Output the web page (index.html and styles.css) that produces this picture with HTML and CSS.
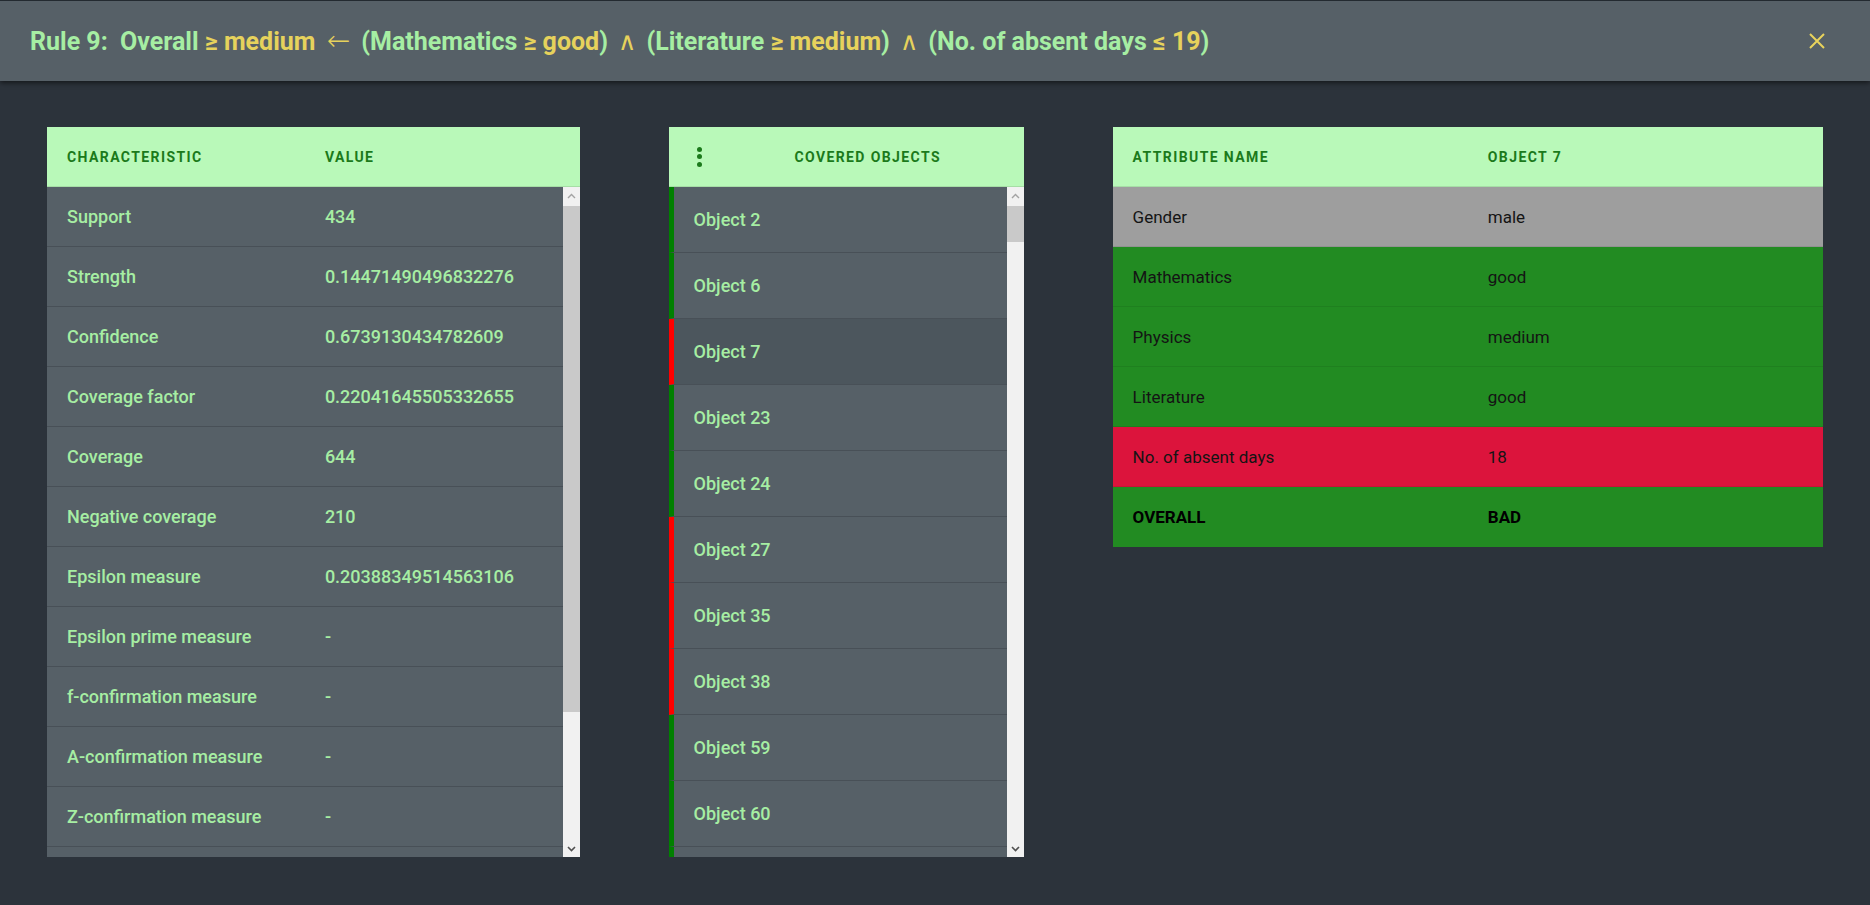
FILE: index.html
```html
<!DOCTYPE html>
<html lang="en">
<head>
<meta charset="utf-8">
<title>Rule 9</title>
<link rel="stylesheet" href="styles.css">
</head>
<body>
<header class="topbar">
  <h1 class="rule-title">
    <span class="g rule-no">Rule 9:</span>
    <span class="g">Overall</span>
    <span class="y">≥ medium</span>
    <span class="y arrow">←</span>
    <span class="g">(Mathematics</span> <span class="y">≥ good</span><span class="g">)</span>
    <span class="y wedge">∧</span>
    <span class="g">(Literature</span> <span class="y">≥ medium</span><span class="g">)</span>
    <span class="y wedge">∧</span>
    <span class="g">(No. of absent days</span> <span class="y">≤ 19</span><span class="g">)</span>
  </h1>
  <button class="close" aria-label="Close">
    <svg width="18" height="18" viewBox="0 0 18 18"><path d="M2 2 L16 16 M16 2 L2 16" stroke="#e8d35c" stroke-width="2" fill="none"/></svg>
  </button>
</header>

<main class="content">
  <section class="panel">
    <div class="thead two-col scroll-pad">
      <div class="th">Characteristic</div>
      <div class="th">Value</div>
    </div>
    <div class="tbody">
      <div class="rows">
        <div class="row two-col"><div>Support</div><div>434</div></div>
        <div class="row two-col"><div>Strength</div><div>0.14471490496832276</div></div>
        <div class="row two-col"><div>Confidence</div><div>0.6739130434782609</div></div>
        <div class="row two-col"><div>Coverage factor</div><div>0.22041645505332655</div></div>
        <div class="row two-col"><div>Coverage</div><div>644</div></div>
        <div class="row two-col"><div>Negative coverage</div><div>210</div></div>
        <div class="row two-col"><div>Epsilon measure</div><div>0.20388349514563106</div></div>
        <div class="row two-col"><div>Epsilon prime measure</div><div>-</div></div>
        <div class="row two-col"><div>f-confirmation measure</div><div>-</div></div>
        <div class="row two-col"><div>A-confirmation measure</div><div>-</div></div>
        <div class="row two-col"><div>Z-confirmation measure</div><div>-</div></div>
      </div>
      <div class="vscroll">
        <div class="sb-btn">
          <svg width="9" height="6" viewBox="0 0 9 6"><path d="M1 5 L4.5 1.5 L8 5" fill="none" stroke="#a3a3a3" stroke-width="1.4"/></svg>
        </div>
        <div class="sb-track"><div class="sb-thumb" style="height:506px"></div></div>
        <div class="sb-btn">
          <svg width="9" height="6" viewBox="0 0 9 6"><path d="M1 1 L4.5 4.5 L8 1" fill="none" stroke="#505050" stroke-width="1.6"/></svg>
        </div>
      </div>
    </div>
  </section>

  <section class="panel">
    <div class="thead objects-head scroll-pad">
      <div class="kebab"><i></i><i></i><i></i></div>
      <div class="th center">Covered objects</div>
    </div>
    <div class="tbody">
      <div class="rows">
        <div class="obj pos">Object 2</div>
        <div class="obj pos">Object 6</div>
        <div class="obj neg selected">Object 7</div>
        <div class="obj pos">Object 23</div>
        <div class="obj pos">Object 24</div>
        <div class="obj neg">Object 27</div>
        <div class="obj neg">Object 35</div>
        <div class="obj neg">Object 38</div>
        <div class="obj pos">Object 59</div>
        <div class="obj pos">Object 60</div>
        <div class="obj pos"></div>
      </div>
      <div class="vscroll">
        <div class="sb-btn">
          <svg width="9" height="6" viewBox="0 0 9 6"><path d="M1 5 L4.5 1.5 L8 5" fill="none" stroke="#a3a3a3" stroke-width="1.4"/></svg>
        </div>
        <div class="sb-track"><div class="sb-thumb" style="height:36px"></div></div>
        <div class="sb-btn">
          <svg width="9" height="6" viewBox="0 0 9 6"><path d="M1 1 L4.5 4.5 L8 1" fill="none" stroke="#505050" stroke-width="1.6"/></svg>
        </div>
      </div>
    </div>
  </section>

  <section class="panel attrs">
    <div class="thead two-col">
      <div class="th">Attribute name</div>
      <div class="th">Object 7</div>
    </div>
    <div class="arow two-col neutral"><div>Gender</div><div>male</div></div>
    <div class="arow two-col ok"><div>Mathematics</div><div>good</div></div>
    <div class="arow two-col ok"><div>Physics</div><div>medium</div></div>
    <div class="arow two-col ok"><div>Literature</div><div>good</div></div>
    <div class="arow two-col bad"><div>No. of absent days</div><div>18</div></div>
    <div class="arow two-col ok strong"><div>OVERALL</div><div>BAD</div></div>
  </section>
</main>
</body>
</html>
```

FILE: styles.css
```css
html, body {
  margin: 0;
  padding: 0;
}
body {
  background: #2c333b;
  font-family: Roboto, "Liberation Sans", sans-serif;
  min-height: 905px;
  overflow: hidden;
}

.topbar {
  height: 80px;
  border-top: 1px solid #232a30;
  background: #566067;
  box-shadow: 0 2px 5px rgba(0, 0, 0, 0.55);
  display: flex;
  align-items: center;
  justify-content: space-between;
  padding: 0 44px 0 30px;
  position: relative;
  z-index: 2;
}
.rule-title {
  margin: 0;
  font-size: 25px;
  font-weight: 700;
  white-space: nowrap;
  line-height: 1;
}
.g { color: #a6eea3; }
.y { color: #e6d25c; }
.rule-no { margin-right: 6px; }
.arrow {
  font-family: "DejaVu Sans ExtraLight", "DejaVu Sans", sans-serif;
  font-size: 28px;
  font-weight: 200;
  line-height: 1;
  margin: 0 5px;
}
.wedge { font-weight: 400; margin: 0 4px; }
.close {
  background: none;
  border: 0;
  padding: 0;
  width: 18px;
  height: 18px;
  display: flex;
  cursor: pointer;
}

.content {
  display: grid;
  grid-template-columns: 3fr 2fr 4fr;
  column-gap: 5%;
  padding: 46px 47px 0;
  align-items: start;
}

.panel {
  background: #566067;
}

.two-col {
  display: grid;
  grid-template-columns: 1fr 1fr;
}
.scroll-pad { padding-right: 17px; }

.thead {
  height: 60px;
  background: #b9f9b9;
  align-items: center;
  border-bottom: 1px solid #a6dea6;
  box-sizing: border-box;
}
.th {
  padding-left: 20px;
  font-size: 14px;
  font-weight: 700;
  letter-spacing: 1.4px;
  text-transform: uppercase;
  color: #1b7a1b;
}
.th.center { padding-left: 0; text-align: center; }

.objects-head {
  display: grid;
  grid-template-columns: 60px 1fr;
}
.kebab {
  display: flex;
  flex-direction: column;
  align-items: center;
  gap: 2.5px;
  padding-left: 2px;
}
.kebab i {
  width: 5px;
  height: 5px;
  border-radius: 50%;
  background: #1b7a1b;
}

.tbody {
  height: 670px;
  display: flex;
}
.rows {
  flex: 1;
  min-width: 0;
  overflow: hidden;
}
.vscroll {
  width: 17px;
  flex: none;
  background: #f1f1f1;
  display: flex;
  flex-direction: column;
}
.sb-btn {
  height: 17px;
  flex: none;
  display: flex;
  align-items: center;
  justify-content: center;
}
.sb-track {
  flex: 1;
  padding-top: 2px;
}
.sb-thumb {
  background: #c9c9c9;
}

.row {
  height: 60px;
  align-items: center;
  border-bottom: 1px solid #485057;
  box-sizing: border-box;
  color: #a6eea3;
  font-size: 18px;
  font-weight: 500;
}
.row > div { padding-left: 20px; white-space: nowrap; }

.obj {
  height: 66px;
  display: flex;
  align-items: center;
  box-sizing: border-box;
  padding-left: 20px;
  border-left: 5px solid #008000;
  border-bottom: 1px solid #485057;
  color: #a6eea3;
  font-size: 18px;
  font-weight: 500;
}
.obj.neg { border-left-color: #ff0000; }
.obj.selected { background: #4c565d; }

.attrs .arow {
  height: 60px;
  align-items: center;
  box-sizing: border-box;
  border-bottom: 1px solid rgba(0, 0, 0, 0.08);
  color: #141414;
  font-size: 17px;
  font-weight: 400;
}
.arow > div { padding-left: 20px; }
.arow.neutral { background: #9e9e9e; }
.arow.ok { background: #228b22; }
.arow.bad { background: #dc143c; }
.arow.strong { font-weight: 700; color: #000; border-bottom: 0; }
```
